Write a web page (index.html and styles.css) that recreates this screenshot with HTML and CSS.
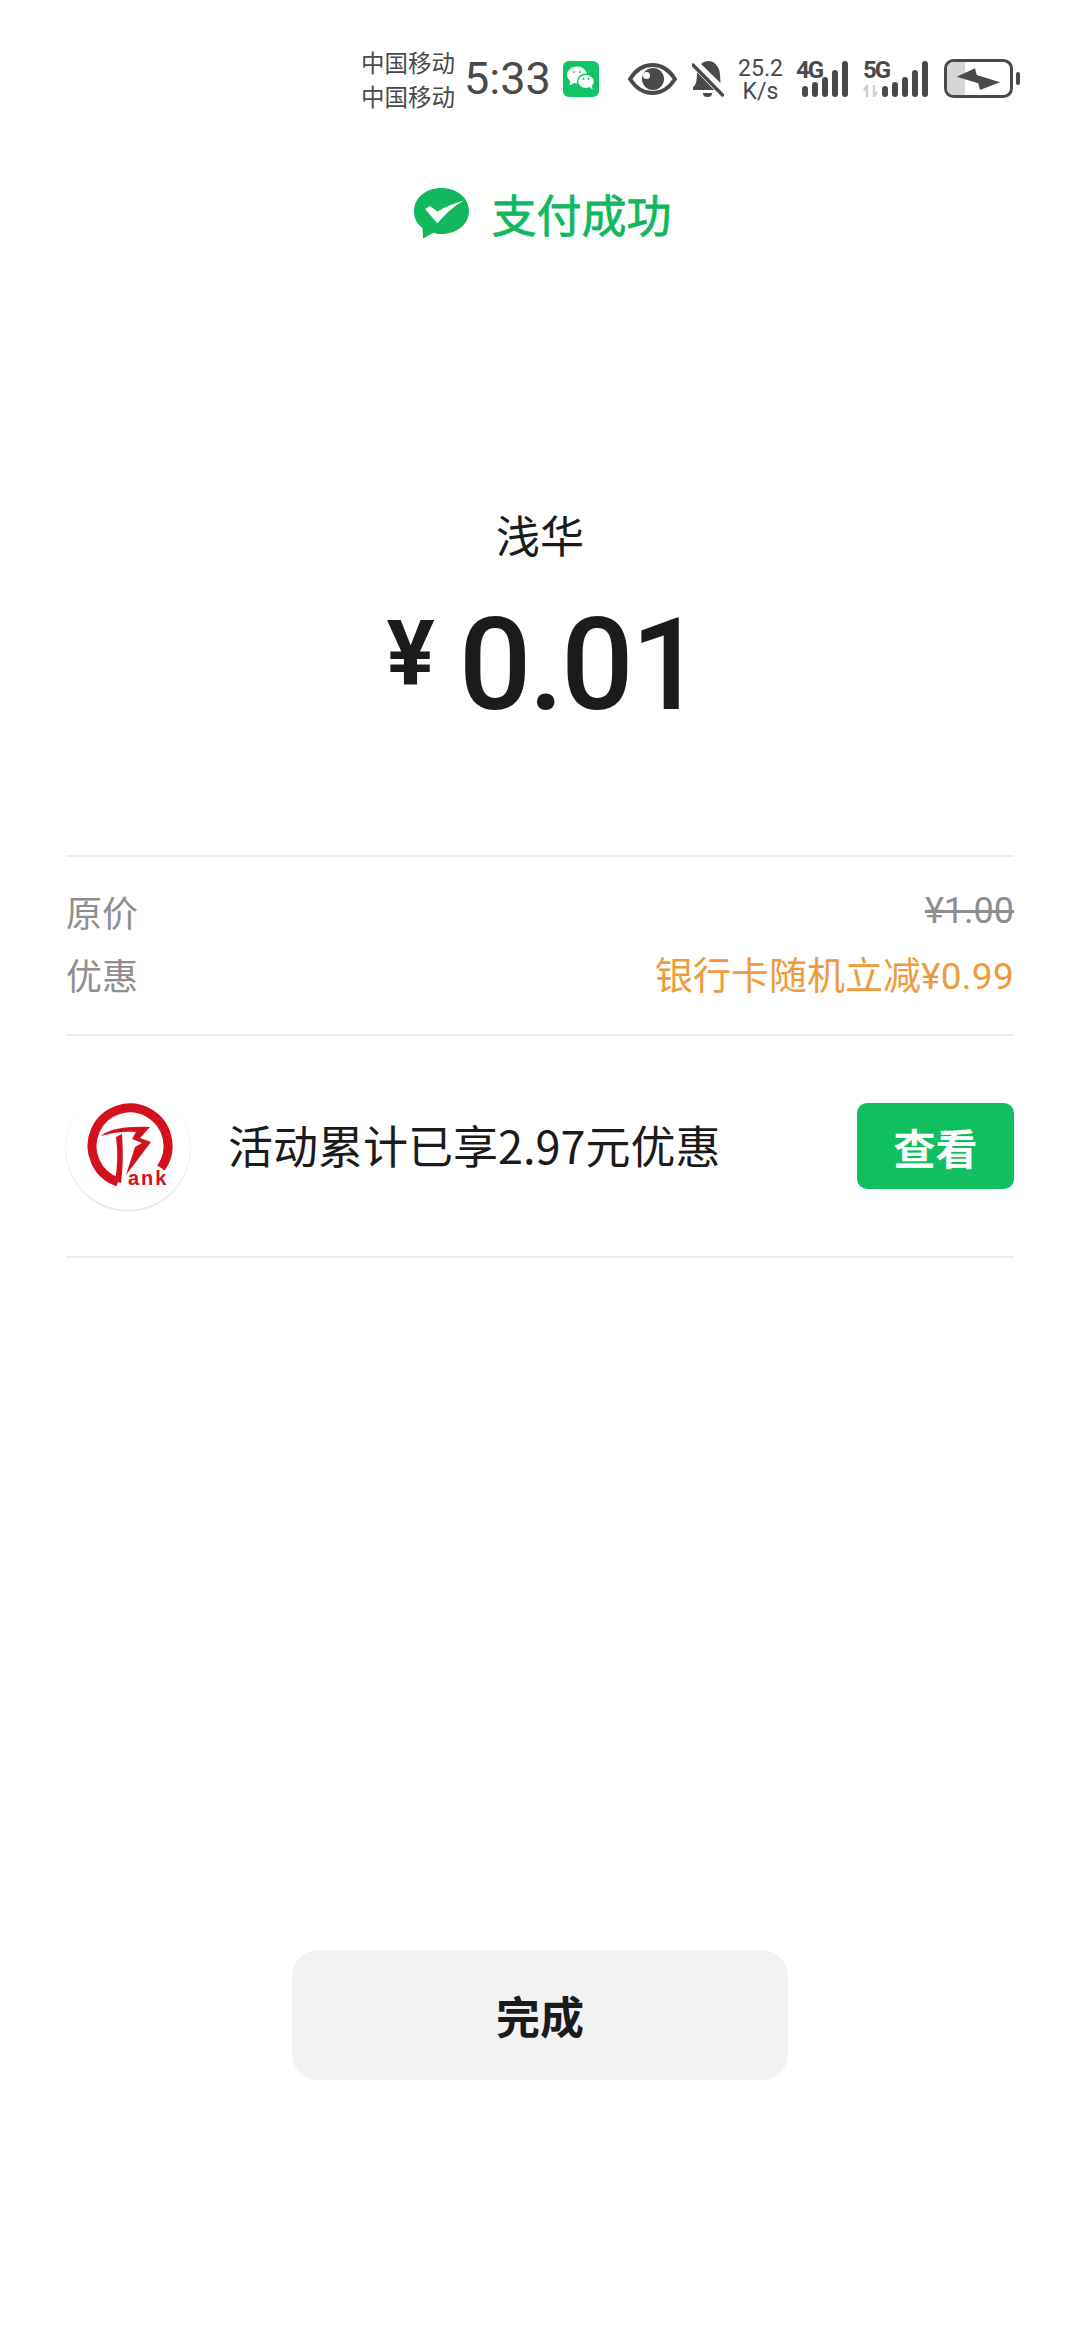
FILE: index.html
```html
<!DOCTYPE html>
<html lang="zh">
<head>
<meta charset="utf-8">
<title>支付成功</title>
<link rel="stylesheet" href="styles.css">
</head>
<body>
<div class="page">
  <header class="status">
    <div class="carriers"><span>中国移动</span><span>中国移动</span></div>
    <span class="time">5:33</span>
    <svg class="wx" viewBox="0 0 36 36"><rect width="36" height="36" rx="6" fill="#12c464"/><ellipse cx="14" cy="14" rx="10" ry="8.500" fill="#fff"/><path d="M7.500 19l-1 5.500 5.500-3z" fill="#fff"/><ellipse cx="23" cy="20.500" rx="8.500" ry="7.200" fill="#fff" stroke="#12c464" stroke-width="1.400"/><path d="M27 26l2.500 3-.5-4.500z" fill="#fff"/><circle cx="11" cy="11" r="1" fill="#12c464"/><circle cx="17" cy="11" r="1" fill="#12c464"/><circle cx="20.500" cy="18" r=".9" fill="#12c464"/><circle cx="25.500" cy="18" r=".9" fill="#12c464"/></svg>
    <svg class="eye" viewBox="0 0 49 32"><path d="M2 16C8 6.500 16 2 24.500 2S41 6.500 47 16c-6 9.500-14 14-22.500 14S8 25.500 2 16z" fill="none" stroke="#4a4a4a" stroke-width="3.800"/><circle cx="25" cy="16" r="11" fill="#4a4a4a"/><circle cx="18.500" cy="12.500" r="3.500" fill="#fff"/></svg>
    <svg class="bell" viewBox="0 0 32 36"><path d="M9 3c2-2 5-3 7-3 8 0 12 8 12 14l.5 8z" fill="#4a4a4a"/><path d="M5 11c0 9-1 13-4 15v3h22z" fill="#4a4a4a"/><path d="M11 32h9c0 3-2 4-4.500 4S11 35 11 32z" fill="#4a4a4a"/><path d="M1 3.500l29 30" stroke="#fff" stroke-width="5"/><path d="M1 4l29.500 30" stroke="#4a4a4a" stroke-width="3.400" stroke-linecap="round"/></svg>
    <div class="speed"><span>25.2</span><span>K/s</span></div>
    <div class="net">
      <span class="gen">4G</span>
      <svg class="bars" width="46" height="36" viewBox="0 0 46 36"><g fill="#4a4a4a"><rect x="0" y="25" width="6" height="11" rx="3"/><rect x="10" y="21" width="6" height="15" rx="3"/><rect x="20" y="16" width="6" height="20" rx="3"/><rect x="30" y="9" width="6" height="27" rx="3"/><rect x="40" y="0" width="6" height="36" rx="3"/></g></svg>
    </div>
    <div class="net net-five">
      <span class="gen">5G</span>
      <svg class="arrows" width="16" height="12" viewBox="0 0 16 12"><path d="M4 12V1L1 5M11 0v11l3-4" fill="none" stroke="#cfcfcf" stroke-width="2.500"/></svg>
      <svg class="bars" width="46" height="36" viewBox="0 0 46 36"><g fill="#4a4a4a"><rect x="0" y="25" width="6" height="11" rx="3"/><rect x="10" y="21" width="6" height="15" rx="3"/><rect x="20" y="16" width="6" height="20" rx="3"/><rect x="30" y="9" width="6" height="27" rx="3"/><rect x="40" y="0" width="6" height="36" rx="3"/></g></svg>
    </div>
    <svg class="battery" viewBox="0 0 76 39"><rect x="1.500" y="1.500" width="66" height="36" rx="8" fill="#fff" stroke="#4a4a4a" stroke-width="3"/><path d="M3 10a7 7 0 0 1 7-7h11v33H10a7 7 0 0 1-7-7z" fill="#d6d6d6"/><path d="M12.700 17.700L31 9.300l1.700 6.700L56 23.300 36 31l-1.700-6.700z" fill="#4a4a4a"/><rect x="72" y="13" width="4" height="13" rx="2" fill="#4a4a4a"/></svg>
  </header>

  <div class="result">
    <svg class="pay-icon" viewBox="0 0 56 56"><path d="M28.500 2C43.500 2 56 11.500 56 25S43.500 48 28.500 48c-3 0-5.500-.4-8-1.200L10 52.500l-.5-10.500C4 38 1 32 1 25 1 11.500 13.500 2 28.500 2z" fill="#12b85e"/><path d="M12 23l5-3 7.500 5.500C32 21 41 17 51 14.500 41 20 32 28 24.500 37.500z" fill="#fff"/></svg>
    <span class="result-text">支付成功</span>
  </div>

  <div class="payee">浅华</div>
  <div class="amount"><span class="yen">¥</span><span class="num">0.01</span></div>

  <section class="details">
    <div class="row"><span class="label">原价</span><span class="old">¥1.00</span></div>
    <div class="row"><span class="label">优惠</span><span class="discount"><span class="discount-cjk">银行卡随机立减</span>¥0.99</span></div>
  </section>

  <section class="promo">
    <div class="logo">
      <svg viewBox="0 0 124 124" width="124" height="124">
        <path d="M52 96A38 38 0 1 1 95 82" fill="none" stroke="#d2101e" stroke-width="9"/>
        <path d="M35 50C43 43 60 40 84 41L74 52 85 56 60 89 69 61 76 57 66 53 70 46C60 45 47 46 35 50z" fill="#d2101e"/>
        <path d="M50 51l6-3q2 28-1 49l-6-2q4-22 1-44z" fill="#d2101e"/>
        <text class="ank" x="62" y="99">ank</text>
      </svg>
    </div>
    <span class="promo-text">活动累计已享2.97元优惠</span>
    <span class="view">查看</span>
  </section>

  <div class="done-wrap"><span class="done">完成</span></div>
</div>
</body>
</html>
```
FILE: styles.css
```css
* { box-sizing: border-box; }
html, body { margin: 0; padding: 0; background: #fff; }
body { width: 1080px; height: 2340px; overflow: hidden; font-family: "Noto Sans CJK SC", Roboto, sans-serif; color: #1b1b1b; }
.page { width: 1080px; height: 2340px; display: flex; flex-direction: column; align-items: center; }

.status { width: 1080px; height: 100px; padding: 45px 60px 0 361px; display: flex; align-items: flex-start; color: #4a4a4a; }
.carriers { width: 95px; flex: none; display: flex; flex-direction: column; font-size: 23.500px; line-height: 34px; white-space: nowrap; }
.time { font-family: Roboto, sans-serif; font-size: 45px; line-height: 50px; margin: 9px 0 0 8px; width: 99px; flex: none; }
.wx { width: 36px; height: 36px; margin: 16px 0 0 0; flex: none; }
.eye { width: 49px; height: 32px; margin: 18px 0 0 29px; flex: none; }
.bell { width: 32px; height: 36px; margin: 16px 0 0 15px; flex: none; }
.speed { width: 45px; flex: none; margin: 12px 0 0 14px; display: flex; flex-direction: column; align-items: center; font-family: Roboto, sans-serif; font-size: 23px; line-height: 23px; white-space: nowrap; }
.net { position: relative; flex: none; width: 52px; height: 36px; margin: 16px 0 0 13px; display: flex; justify-content: flex-end; }
.net-five { margin-left: 15px; width: 65px; }
.gen { position: absolute; left: 0; top: -3px; font-family: Roboto, sans-serif; font-weight: 700; font-size: 24px; line-height: 24px; letter-spacing: -2px; }
.arrows { position: absolute; left: 0; bottom: 0; }
.bars { display: block; }
.battery { width: 76px; height: 39px; margin: 14px 0 0 16px; flex: none; }

.result { margin-top: 86px; height: 56px; padding-left: 5px; display: flex; align-items: center; gap: 22px; }
.pay-icon { width: 56px; height: 56px; }
.result-text { font-size: 45px; color: #12b85e; line-height: 56px; -webkit-text-stroke: 0.8px #12b85e; }

.payee { margin-top: 261px; font-size: 44px; line-height: 62px; }
.amount { margin-top: 35px; height: 130px; padding-left: 7px; display: flex; align-items: center; gap: 24px; font-family: Roboto, sans-serif; font-weight: 500; }
.yen { font-size: 90px; font-weight: 700; line-height: 106px; margin-bottom: 20px; }
.num { font-size: 128px; line-height: 130px; letter-spacing: -3px; }

.details { margin-top: 125px; width: 948px; border-top: 2px solid #ececec; border-bottom: 2px solid #ececec; padding: 29px 0 34px; display: flex; flex-direction: column; gap: 12px; }
.row { height: 51px; display: flex; justify-content: space-between; align-items: center; font-size: 36px; line-height: 51px; color: #8f8f8f; }
.old { text-decoration: line-through; font-family: Roboto, sans-serif; }
.discount { color: #ed9b3d; font-family: Roboto, sans-serif; font-size: 37px; letter-spacing: 0.3px; white-space: nowrap; }
.discount-cjk { font-family: "Noto Sans CJK SC", sans-serif; font-size: 38px; letter-spacing: 0; }

.promo { width: 948px; height: 222px; border-bottom: 2px solid #ececec; display: flex; align-items: center; }
.logo { width: 124px; height: 124px; margin-top: 4px; flex: none; border-radius: 50%; background: #fff; box-shadow: 0 1px 2px #d8d8d8; }
.logo svg { display: block; }
.ank { font-family: "Liberation Sans", sans-serif; font-weight: 700; font-size: 20px; fill: #d2101e; letter-spacing: 2px; }
.promo-text { margin-left: 38px; padding-bottom: 4px; flex: 1; font-size: 45px; color: #1b1b1b; }
.view { width: 157px; height: 86px; border-radius: 10px; background: #10c060; color: #fff; font-size: 42px; font-weight: 700; display: flex; align-items: center; justify-content: center; }

.done-wrap { margin-top: 692px; }
.done { width: 496px; height: 130px; border-radius: 26px; background: #f2f2f2; font-size: 44px; font-weight: 700; display: flex; align-items: center; justify-content: center; }
```
